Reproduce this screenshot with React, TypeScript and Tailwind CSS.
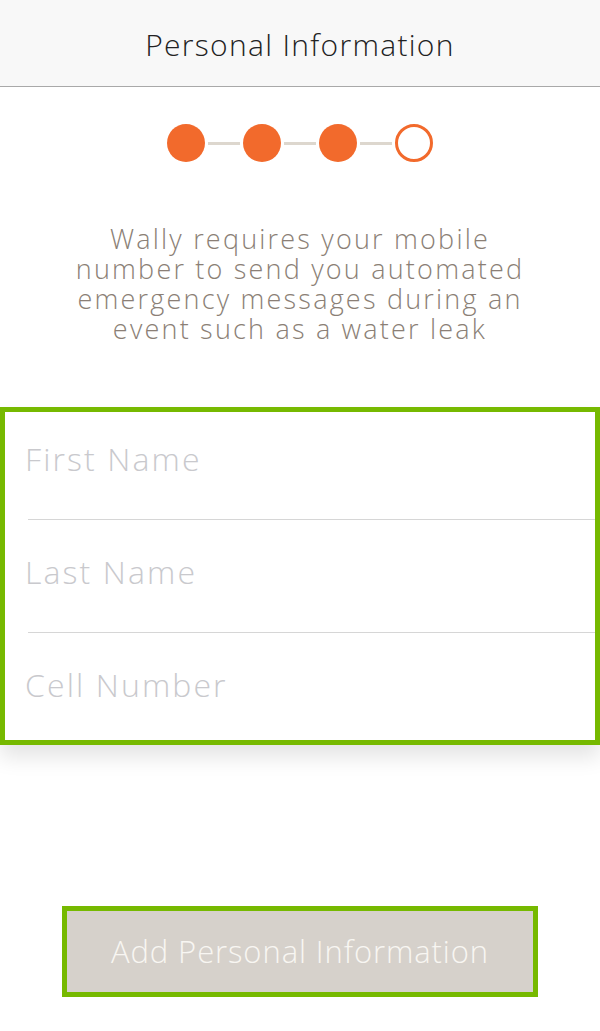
const font = { fontFamily: '"Open Sans", "Liberation Sans", sans-serif' };

const Step = ({ filled }: { filled: boolean }) => (
  <div
    className={
      filled
        ? 'w-[38px] h-[38px] rounded-full bg-[#f26a2c]'
        : 'w-[38px] h-[38px] rounded-full border-[3px] border-[#f26a2c] bg-white'
    }
  />
);

const Connector = () => <div className="w-[32px] h-[3px] mx-[3px] bg-[#ddd7ce]" />;

const Field = ({ label, className }: { label: string; className: string }) => (
  <div className={className}>
    <input
      placeholder={label}
      className="w-full bg-transparent outline-none text-[32px] font-light tracking-[2.1px] text-[#555] placeholder:text-[#c9c9cd]"
      style={font}
    />
  </div>
);

export default function App() {
  return (
    <div className="w-[600px] h-[1031px] bg-white flex flex-col overflow-hidden" style={font}>
      {/* Header */}
      <header className="h-[87px] bg-[#f8f8f8] border-b border-[#a9a9a9] flex items-center justify-center">
        <h1 className="text-[30px] font-light text-[#222] tracking-[1.3px] leading-none mt-[4px]">
          Personal Information
        </h1>
      </header>

      {/* Progress */}
      <div className="mt-[37px] flex items-center justify-center">
        <Step filled />
        <Connector />
        <Step filled />
        <Connector />
        <Step filled />
        <Connector />
        <Step filled={false} />
      </div>

      {/* Description */}
      <p className="mt-[62px] px-[40px] text-center text-[27px] leading-[30px] font-light text-[#8b7f76] tracking-[2.2px]">
        Wally requires your mobile
        <br />
        number to send you automated
        <br />
        emergency messages during an
        <br />
        event such as a water leak
      </p>

      {/* Form */}
      <div className="mt-[63px] h-[338px] border-[5px] border-[#76b900] bg-white shadow-[0_12px_20px_rgba(0,0,0,0.11)] flex flex-col">
        <Field label="First Name" className="h-[107px] flex items-start pl-[20px] pt-[23px]" />
        <div className="ml-[23px] h-px bg-[#d6d6d6]" />
        <Field label="Last Name" className="h-[112px] flex items-start pl-[20px] pt-[28px]" />
        <div className="ml-[23px] h-px bg-[#d6d6d6]" />
        <Field label="Cell Number" className="h-[107px] flex items-start pl-[20px] pt-[28px]" />
      </div>

      {/* Action */}
      <div className="mt-[161px] flex justify-center">
        <button className="w-[476px] h-[91px] border-[5px] border-[#76b900] bg-[#d6d1cb] text-[#f8f6f2] text-[31px] font-light tracking-[0.9px]">
          Add Personal Information
        </button>
      </div>
    </div>
  );
}
